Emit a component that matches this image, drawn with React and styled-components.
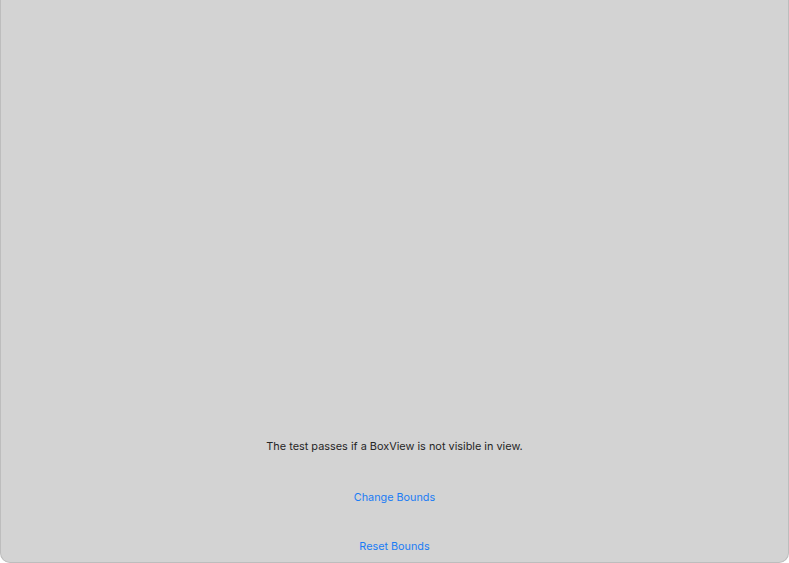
import React from 'react'
import styled, { createGlobalStyle } from 'styled-components'

const GlobalStyle = createGlobalStyle`
  html, body {
    margin: 0;
    padding: 0;
    background: #ffffff;
  }
  #root {
    width: 789px;
    height: 563px;
  }
`

const Window = styled.div`
  box-sizing: border-box;
  width: 789px;
  height: 563px;
  background: #d3d3d3;
  border: 1px solid #bdbdbd;
  border-top: none;
  border-radius: 0 0 10px 10px;
  display: flex;
  flex-direction: column;
  justify-content: flex-end;
  align-items: center;
  font-family: Inter, "Liberation Sans", sans-serif;
  overflow: hidden;
`

const Content = styled.div`
  display: flex;
  flex-direction: column;
  align-items: center;
  padding-bottom: 7px;
`

const Caption = styled.p`
  margin: 0 0 36px;
  font-size: 10.9px;
  line-height: 16px;
  color: #262626;
`

const LinkButton = styled.button`
  border: none;
  background: none;
  padding: 0;
  height: 16px;
  margin-bottom: ${(p) => p.$gap}px;
  font-family: inherit;
  font-size: 10.8px;
  line-height: 16px;
  color: #1a7cf5;
  cursor: pointer;
`

export default function App() {
  return (
    <>
      <GlobalStyle />
      <Window>
        <Content>
          <Caption>The test passes if a BoxView is not visible in view.</Caption>
          <LinkButton $gap={33}>Change Bounds</LinkButton>
          <LinkButton $gap={0}>Reset Bounds</LinkButton>
        </Content>
      </Window>
    </>
  )
}
